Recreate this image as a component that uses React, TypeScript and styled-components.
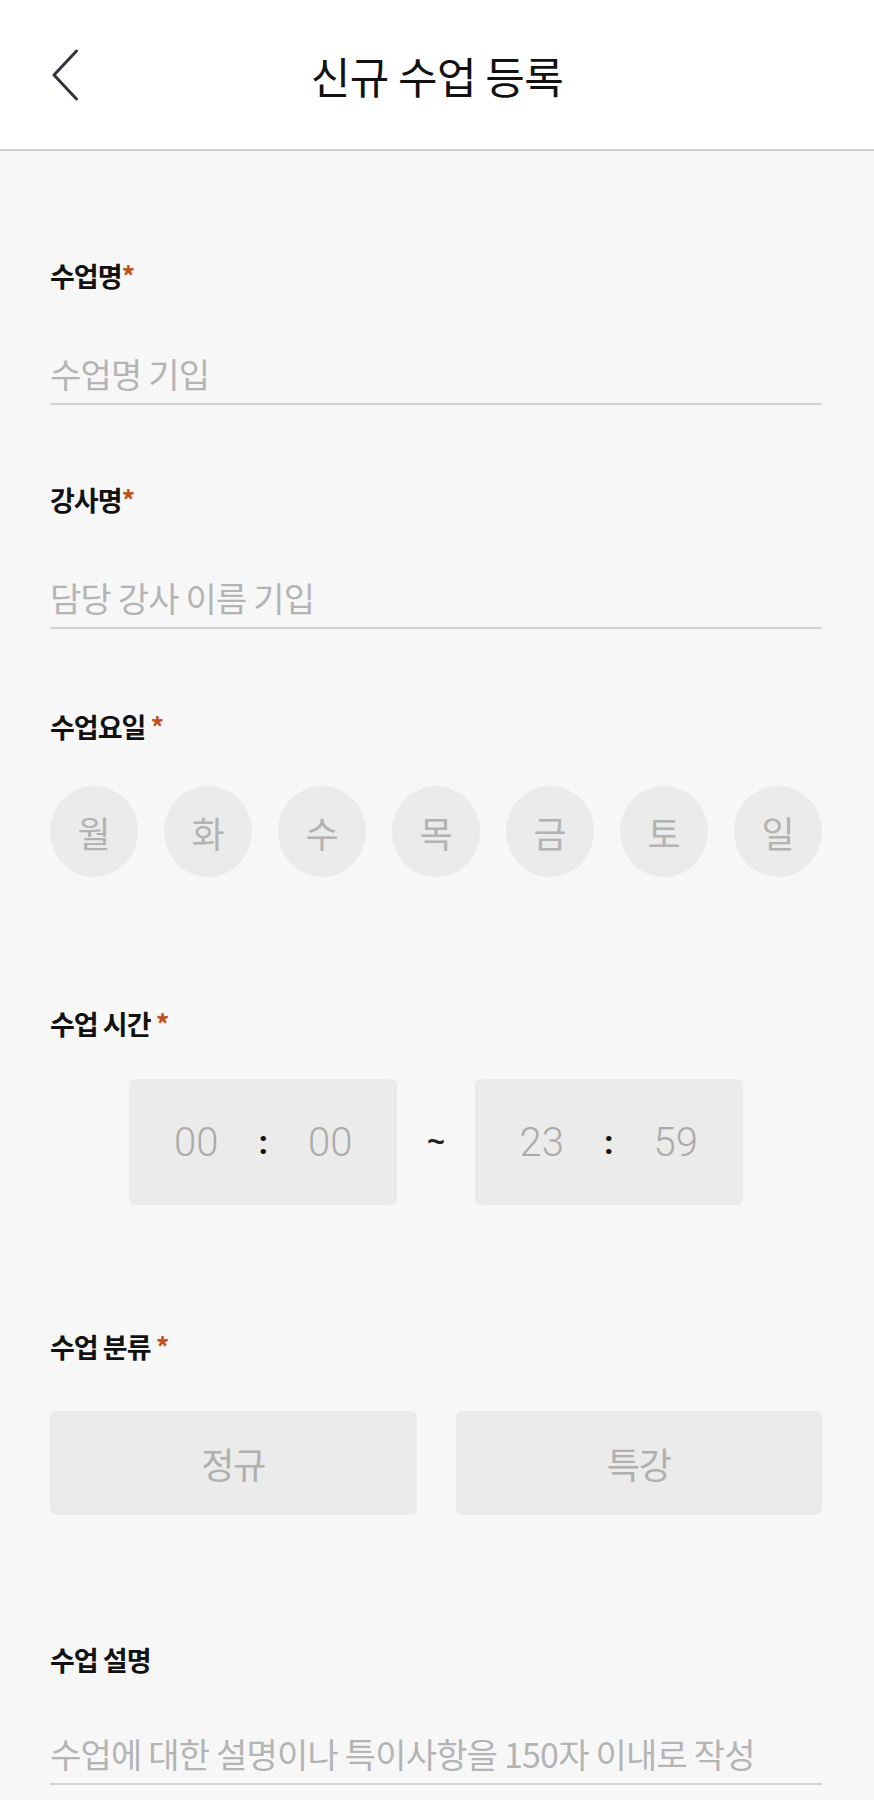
import React, { useState } from "react";
import styled, { createGlobalStyle } from "styled-components";

const DAYS = ["월", "화", "수", "목", "금", "토", "일"];
const KINDS = ["정규", "특강"];

const GlobalStyle = createGlobalStyle`
  * {
    box-sizing: border-box;
  }
  body {
    margin: 0;
    background: #f7f7f7;
    font-family: "Noto Sans CJK KR", "Noto Sans", sans-serif;
  }
`;

const NewClass = () => {
  const [days, setDays] = useState([] as string[]);
  const [kind, setKind] = useState("");

  const toggleDay = (day: string) => {
    setDays((prev) =>
      prev.includes(day) ? prev.filter((d) => d !== day) : [...prev, day]
    );
  };

  return (
    <Page>
      <GlobalStyle />
      <Header>
        <BackButton aria-label="뒤로">
          <svg width="26" height="52" viewBox="0 0 26 52">
            <polyline
              points="24.5,2 2,26 24.5,50"
              fill="none"
              stroke="#34343f"
              strokeWidth="3"
              strokeLinecap="round"
              strokeLinejoin="round"
            />
          </svg>
        </BackButton>
        <Title>신규 수업 등록</Title>
        <span />
      </Header>

      <Body>
        <Field $top={0} $gap={57}>
          <Label>
            수업명<Star>*</Star>
          </Label>
          <TextInput placeholder="수업명 기입" />
        </Field>

        <Field $top={77} $gap={57}>
          <Label>
            강사명<Star>*</Star>
          </Label>
          <TextInput placeholder="담당 강사 이름 기입" />
        </Field>

        <Field $top={80} $gap={41}>
          <Label>
            수업요일 <Star>*</Star>
          </Label>
          <DayRow>
            {DAYS.map((day) => (
              <DayButton
                key={day}
                $active={days.includes(day)}
                onClick={() => toggleDay(day)}
              >
                {day}
              </DayButton>
            ))}
          </DayRow>
        </Field>

        <Field $top={129} $gap={37}>
          <Label>
            수업 시간 <Star>*</Star>
          </Label>
          <TimeRow>
            <TimeBox>
              <Digits>00</Digits>
              <Colon>:</Colon>
              <Digits>00</Digits>
            </TimeBox>
            <Tilde>~</Tilde>
            <TimeBox>
              <Digits>23</Digits>
              <Colon>:</Colon>
              <Digits>59</Digits>
            </TimeBox>
          </TimeRow>
        </Field>

        <Field $top={124} $gap={46}>
          <Label>
            수업 분류 <Star>*</Star>
          </Label>
          <KindGrid>
            {KINDS.map((k) => (
              <KindButton key={k} $active={kind === k} onClick={() => setKind(k)}>
                {k}
              </KindButton>
            ))}
          </KindGrid>
        </Field>

        <Field $top={127} $gap={53}>
          <Label>수업 설명</Label>
          <TextInput placeholder="수업에 대한 설명이나 특이사항을 150자 이내로 작성" />
        </Field>
      </Body>
    </Page>
  );
};

const Page = styled.div`
  min-height: 100vh;
  background: #f7f7f7;
`;

const Header = styled.header`
  display: grid;
  grid-template-columns: 1fr auto 1fr;
  align-items: center;
  height: 151px;
  background: #ffffff;
  border-bottom: 2px solid #cdcdcd;
`;

const BackButton = styled.button`
  justify-self: start;
  display: flex;
  margin-left: 52px;
  padding: 0;
  border: none;
  background: none;
  cursor: pointer;
`;

const Title = styled.h1`
  margin: 0;
  font-size: 43px;
  font-weight: 400;
  letter-spacing: -0.5px;
  color: #111111;
`;

const Body = styled.main`
  display: flex;
  flex-direction: column;
  padding: 107px 52px 0 50px;
`;

const Field = styled.section<{ $top: number; $gap: number }>`
  display: flex;
  flex-direction: column;
  gap: ${(props) => props.$gap}px;
  margin-top: ${(props) => props.$top}px;
`;

const Label = styled.h2`
  margin: 0;
  font-size: 27px;
  line-height: 36px;
  font-weight: 700;
  letter-spacing: -1px;
  color: #111111;
`;

const Star = styled.span`
  color: #c4501a;
`;

const TextInput = styled.input`
  width: 100%;
  height: 54px;
  padding: 0 0 8px;
  border: none;
  border-bottom: 2px solid #d2d2d2;
  background: transparent;
  font-family: inherit;
  font-size: 34px;
  letter-spacing: -0.8px;
  color: #333333;
  outline: none;
  &::placeholder {
    color: #b4b4b4;
  }
`;

const DayRow = styled.div`
  display: flex;
  justify-content: space-between;
`;

const DayButton = styled.button<{ $active: boolean }>`
  width: 88px;
  height: 91px;
  padding: 0;
  border: none;
  border-radius: 50%;
  background: ${(props) => (props.$active ? "#c4501a" : "#ebebeb")};
  font-family: inherit;
  font-size: 36px;
  color: ${(props) => (props.$active ? "#ffffff" : "#b3b3b3")};
  cursor: pointer;
`;

const TimeRow = styled.div`
  display: flex;
  justify-content: center;
  align-items: center;
  gap: 30px;
`;

const TimeBox = styled.div`
  display: flex;
  justify-content: center;
  align-items: center;
  gap: 40px;
  width: 268px;
  height: 126px;
  border-radius: 6px;
  background: #ebebeb;
`;

const Digits = styled.span`
  font-family: Roboto, "Liberation Sans", sans-serif;
  font-size: 40px;
  font-weight: 300;
  color: #aaaaaa;
`;

const Colon = styled.span`
  font-family: Roboto, "Liberation Sans", sans-serif;
  font-size: 34px;
  font-weight: 700;
  color: #111111;
`;

const Tilde = styled.span`
  font-family: "Liberation Sans", sans-serif;
  font-size: 30px;
  font-weight: 700;
  color: #222222;
`;

const KindGrid = styled.div`
  display: grid;
  grid-template-columns: 1fr 1fr;
  gap: 39px;
`;

const KindButton = styled.button<{ $active: boolean }>`
  height: 104px;
  border: none;
  border-radius: 6px;
  background: ${(props) => (props.$active ? "#c4501a" : "#ebebeb")};
  font-family: inherit;
  font-size: 36px;
  letter-spacing: -1px;
  color: ${(props) => (props.$active ? "#ffffff" : "#b0b0b0")};
  cursor: pointer;
`;

export default NewClass;
